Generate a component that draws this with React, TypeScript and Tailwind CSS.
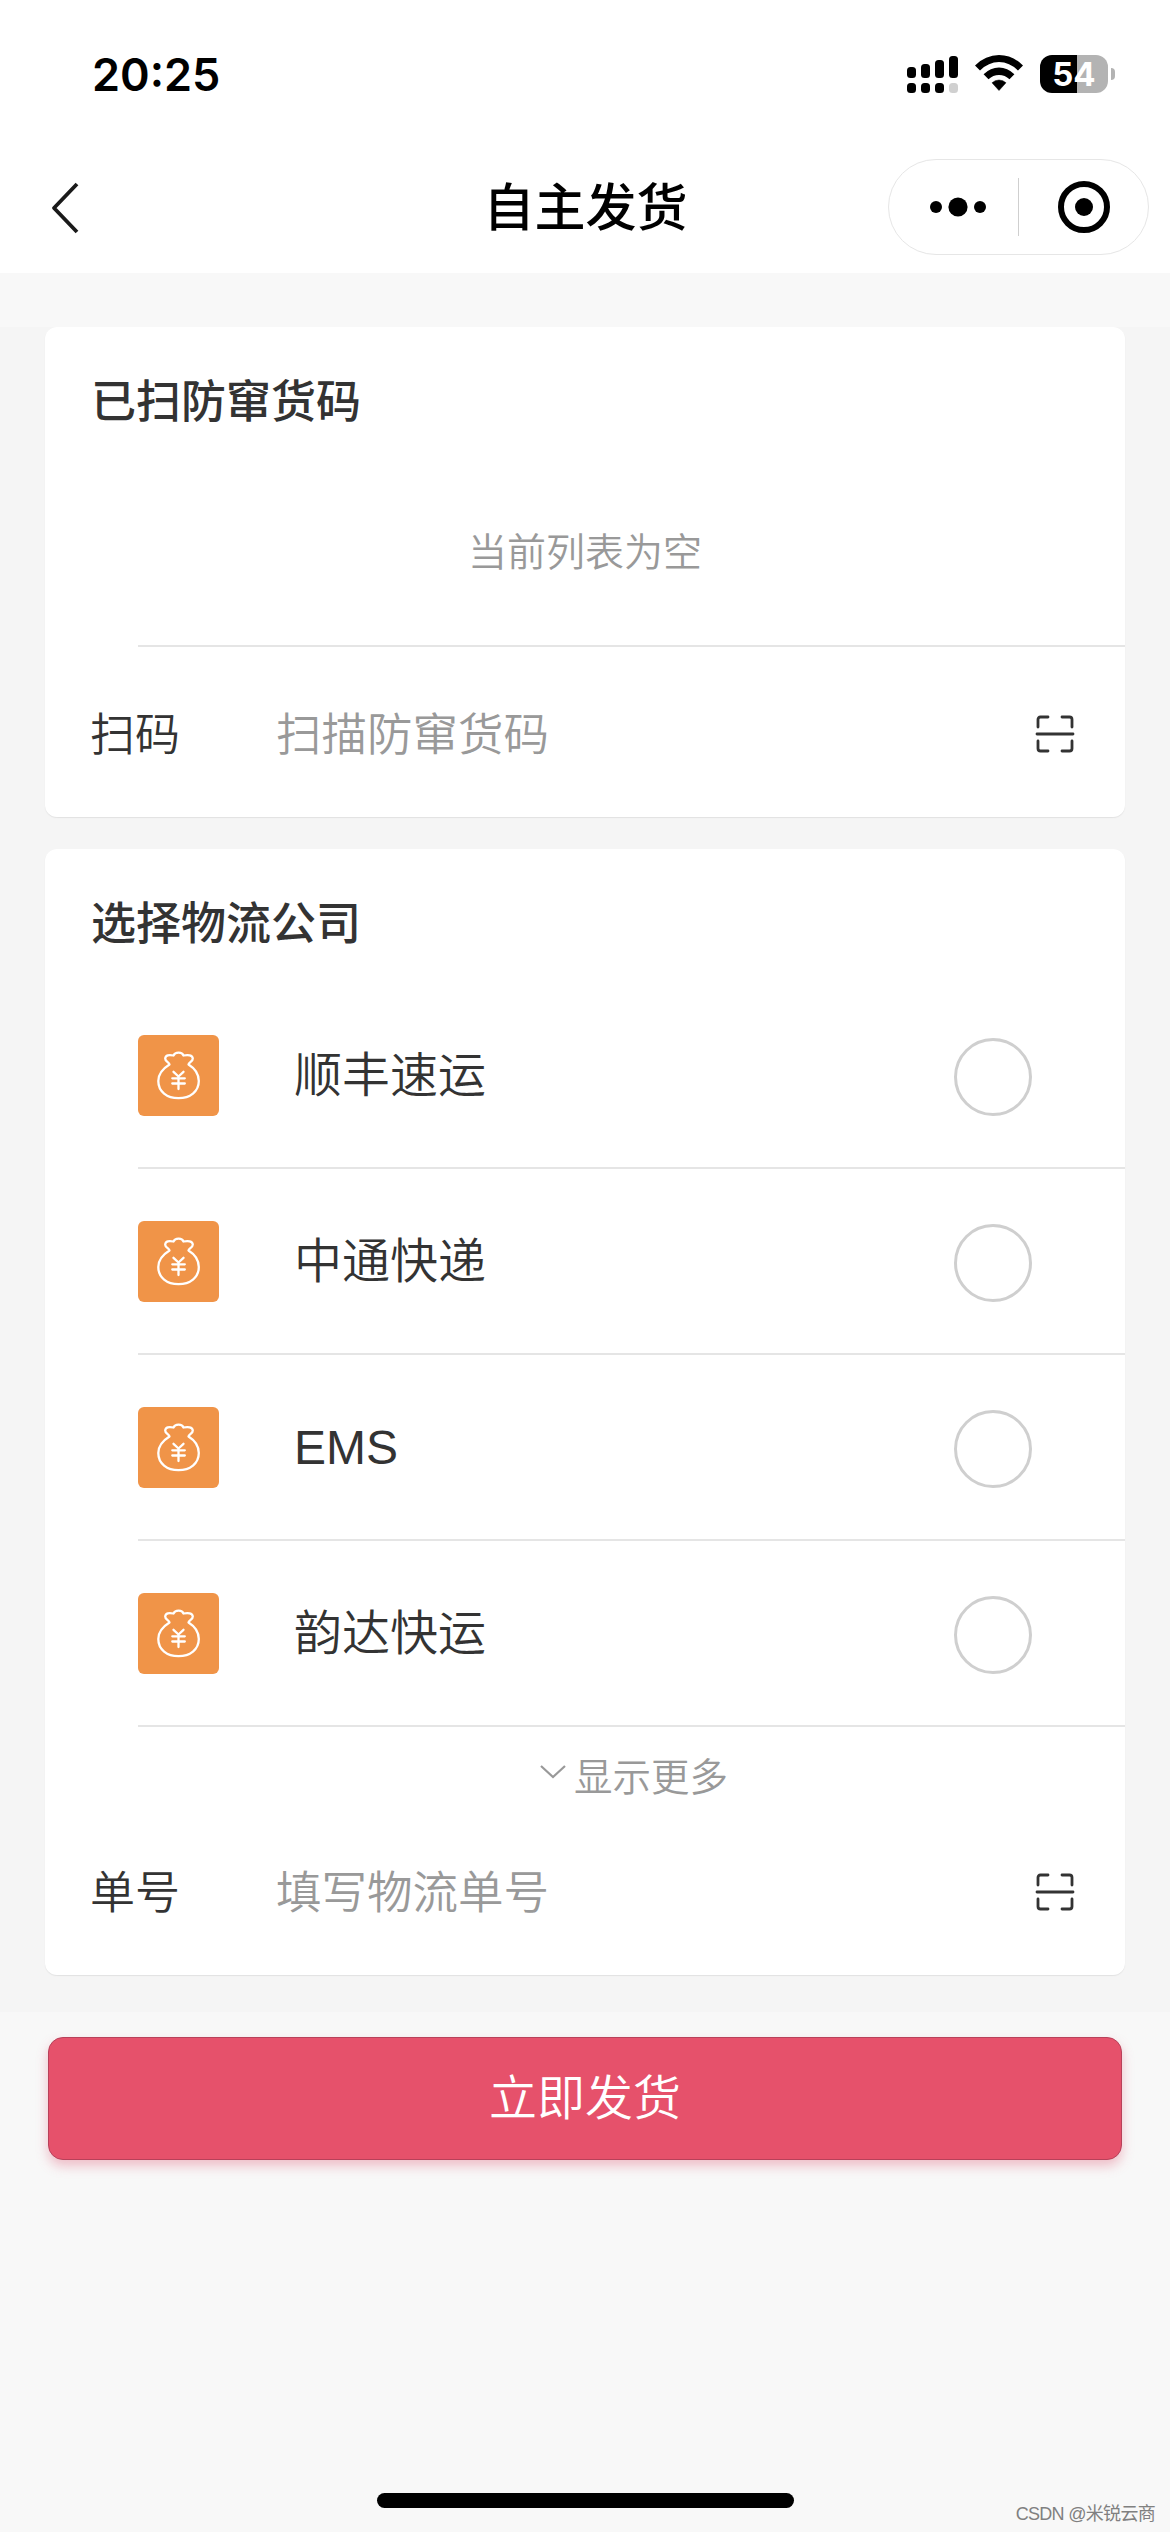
import React, { useState } from 'react';

interface Carrier {
  id: string;
  name: string;
}

const CARRIERS: Carrier[] = [
  { id: 'sf', name: '顺丰速运' },
  { id: 'zto', name: '中通快递' },
  { id: 'ems', name: 'EMS' },
  { id: 'yunda', name: '韵达快运' },
];

const Icons = {
  Signal: () => (
    <svg width="51" height="37" viewBox="0 0 51 37">
      <rect x="0" y="11" width="9" height="11" rx="3.5" />
      <rect x="14" y="8" width="9" height="14" rx="3.5" />
      <rect x="28" y="4" width="9" height="18" rx="3.5" />
      <rect x="42" y="0" width="9" height="22" rx="3.5" />
      <rect x="0" y="27" width="9" height="10" rx="3.5" />
      <rect x="14" y="27" width="9" height="10" rx="3.5" />
      <rect x="28" y="27" width="9" height="10" rx="3.5" />
      <rect x="42" y="27" width="9" height="10" rx="3.5" fill="#d0d0d0" />
    </svg>
  ),
  Wifi: () => (
    <svg width="48" height="36" viewBox="0 0 48 36">
      <path d="M0 10.5Q10.500 0 24 0T48 10.500L43 15.500Q34.500 7 24 7T5 15.500Z" />
      <path d="M8.600 19.300Q15.500 12.500 24 12.500T39.400 19.300L34.500 24.300Q30 20 24 20T13.500 24.300Z" />
      <path d="M17 27.800Q20 25 24 25T31 27.800L24 35.500Z" stroke="#000" strokeWidth="0.500" strokeLinejoin="round" />
    </svg>
  ),
  Back: () => (
    <svg width="30" height="54" viewBox="0 0 30 54" fill="none" stroke="#1a1a1a" strokeWidth="3.8" strokeLinejoin="round">
      <path d="M27 3 4 27 27 51" />
    </svg>
  ),
  Dots: () => (
    <svg width="56" height="20" viewBox="0 0 56 20">
      <circle cx="6" cy="10" r="6" />
      <circle cx="28" cy="10" r="9.600" />
      <circle cx="50" cy="10" r="6" />
    </svg>
  ),
  Target: () => (
    <svg width="52" height="52" viewBox="0 0 52 52">
      <circle cx="26" cy="26" r="23" fill="none" stroke="#000" strokeWidth="6" />
      <circle cx="26" cy="26" r="9" />
    </svg>
  ),
  Scan: () => (
    <svg width="40" height="40" viewBox="0 0 40 40" fill="none" stroke="#333" strokeWidth="2.8" strokeLinecap="round">
      <path d="M3 13V5.500Q3 3 5.500 3H13M27 3H34.500Q37 3 37 5.500V13M3 27V34.500Q3 37 5.500 37H13M27 37H34.500Q37 37 37 34.500V27M2 20H38" />
    </svg>
  ),
  MoneyBag: () => (
    <svg width="81" height="81" viewBox="0 0 81 81" fill="none" stroke="#fff" strokeWidth="2.3" strokeLinecap="round" strokeLinejoin="round">
      <path d="M31.500 29.500C31.500 27.500 27 26.500 27.200 23.500C27.500 20 31 19.500 35.500 20.500C37 17 44 16.500 45.500 20.500C50 19.500 54.500 20 54.800 23.500C55 26.500 50.500 27.500 50.500 29.500C57 33.500 60.800 39 60.800 46C60.800 56.500 52 63.200 40.500 63.200S20.300 56.500 20.300 46C20.300 39 25 33.500 31.500 29.500Z" />
      <path d="M35.500 36.800 40.500 41.500 45.500 36.800M34.300 43.300H46.800M34.300 48.500H46.800M40.500 41.800V54" />
    </svg>
  ),
  ChevronDown: () => (
    <svg width="26" height="14" viewBox="0 0 26 14" fill="none" stroke="#999" strokeWidth="2.2">
      <path d="M1 1 13 12 25 1" />
    </svg>
  ),
};

const StatusBar: React.FC = () => (
  <div className="h-[144px] pl-[92px] pr-[55px] flex items-center justify-between">
    <span className="mt-[5px] text-[45px] leading-none font-semibold font-[Inter,sans-serif]">20:25</span>
    <div className="flex items-center mt-[4px]">
      <Icons.Signal />
      <div className="ml-[17px] -mt-[2px]"><Icons.Wifi /></div>
      <div className="ml-[17px] w-[68px] h-[38px] rounded-[12px] bg-linear-to-r from-black from-54% to-[#b3b3b3] to-54% flex items-center justify-center text-white text-[33px] leading-none font-bold font-[Inter,sans-serif]">
        54
      </div>
      <div className="ml-[3px] w-[4px] h-[12px] rounded-r-full bg-[#b3b3b3]"></div>
    </div>
  </div>
);

const NavBar: React.FC = () => (
  <div className="h-[129px] pl-[50px] pr-[21px] grid grid-cols-[261px_1fr_261px] items-center">
    <button type="button" className="-mt-[2px]"><Icons.Back /></button>
    <h1 className="pr-[28px] text-center text-[51px] leading-none font-medium">自主发货</h1>
    <div className="-mt-[3px] w-[261px] h-[96px] rounded-full border border-[#e6e6e6] flex items-center">
      <div className="w-[129px] pl-[9px] flex justify-center"><Icons.Dots /></div>
      <div className="w-px h-[58px] bg-[#cfcfcf]"></div>
      <div className="flex-1 flex justify-center"><Icons.Target /></div>
    </div>
  </div>
);

interface FieldProps {
  label: string;
  placeholder: string;
}

const ScanField: React.FC<FieldProps> = ({ label, placeholder }) => (
  <div className="flex items-center h-full pl-[45px] pr-[50px] text-[45px] leading-none font-[350]">
    <span className="w-[186px] pt-[3px] text-[#333]">{label}</span>
    <span className="flex-1 pt-[4px] text-[45.500px] text-[#999]">{placeholder}</span>
    <Icons.Scan />
  </div>
);

const App: React.FC = () => {
  const [selected, setSelected] = useState('');

  return (
    <div className="w-[1170px] h-[2532px] bg-[#f8f8f8] text-black font-['Liberation_Sans','Noto_Sans_CJK_SC',sans-serif] flex flex-col overflow-hidden">
      <header className="bg-white">
        <StatusBar />
        <NavBar />
      </header>

      <main className="mt-[54px] h-[1685px] bg-[#f5f5f5] px-[45px] flex flex-col gap-[32px]">
        <section className="h-[490px] rounded-[12px] bg-white shadow-[0_1px_1px_#e2e2e2]">
          <h2 className="h-[148px] pl-[46px] pt-[3px] flex items-center text-[45px] leading-none font-medium text-[#333]">已扫防窜货码</h2>
          <div className="ml-[93px] h-[172px] pr-[93px] pb-[15px] border-b-2 border-[#e5e5e5] flex items-center justify-center text-[39px] leading-none font-[350] text-[#999]">
            当前列表为空
          </div>
          <div className="h-[170px] pt-[3px]">
            <ScanField label="扫码" placeholder="扫描防窜货码" />
          </div>
        </section>

        <section className="h-[1126px] rounded-[12px] bg-white shadow-[0_1px_1px_#e2e2e2]">
          <h2 className="h-[134px] pt-[17px] pl-[46px] flex items-center text-[45px] leading-none font-medium text-[#333]">选择物流公司</h2>
          {CARRIERS.map((carrier) => (
            <div
              key={carrier.id}
              onClick={() => setSelected(carrier.id)}
              className="ml-[93px] h-[186px] pr-[93px] border-b-2 border-[#e5e5e5] flex items-center"
            >
              <div className="w-[81px] h-[81px] rounded-[6px] bg-[#f09448]"><Icons.MoneyBag /></div>
              <span className="ml-[75px] pt-px flex-1 text-[48px] leading-none font-[350] text-[#333]">{carrier.name}</span>
              <span className={`mt-[3px] w-[78px] h-[78px] rounded-full border-3 ${selected === carrier.id ? 'border-[#e6516b]' : 'border-[#cfcfcf]'}`}></span>
            </div>
          ))}
          <button type="button" className="w-full h-[100px] pl-[98px] pt-[3px] flex items-center justify-center gap-[8px] text-[38.500px] leading-none font-[350] text-[#999]">
            <span className="-mt-[13px]"><Icons.ChevronDown /></span>
            显示更多
          </button>
          <div className="h-[130px]">
            <ScanField label="单号" placeholder="填写物流单号" />
          </div>
        </section>
      </main>

      <button
        type="button"
        className="mt-[25px] mx-[48px] h-[123px] pt-px shrink-0 rounded-[15px] border border-[#b8415a] bg-[#e6516b] text-white text-[48px] leading-none font-[350] shadow-[0_6px_12px_rgba(222,80,108,0.35)]"
      >
        立即发货
      </button>

      <footer className="mt-auto h-[60px] relative flex justify-center">
        <div className="mt-[21px] w-[417px] h-[15px] rounded-full bg-black"></div>
        <span className="absolute right-[15px] bottom-[9px] text-[18px] leading-none tracking-[-0.7px] text-[#808080] whitespace-nowrap">CSDN @米锐云商</span>
      </footer>
    </div>
  );
};

export default App;
